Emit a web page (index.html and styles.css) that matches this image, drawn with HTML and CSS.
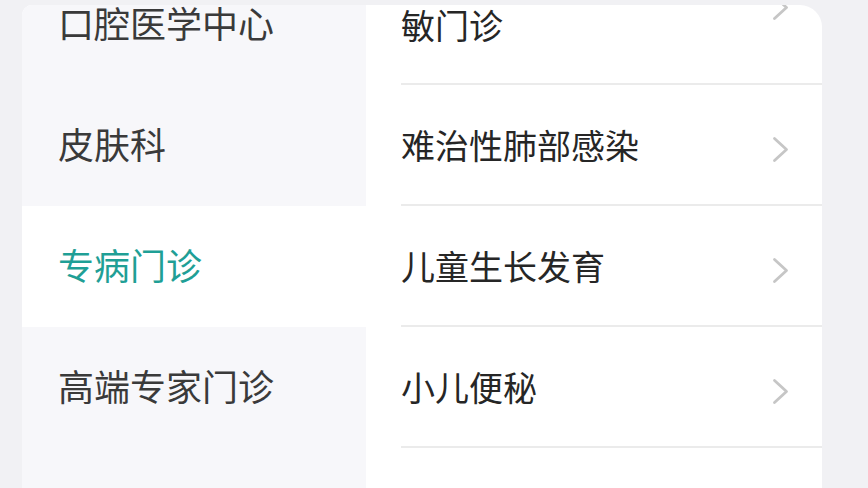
FILE: index.html
```html
<!DOCTYPE html>
<html lang="zh-CN">
<head>
<meta charset="utf-8">
<title>科室选择</title>
<link rel="stylesheet" href="styles.css">
</head>
<body>
<div class="page">
  <div class="card">
    <ul class="dept-list">
      <li class="dept">口腔医学中心</li>
      <li class="dept">皮肤科</li>
      <li class="dept active">专病门诊</li>
      <li class="dept">高端专家门诊</li>
      <li class="dept"></li>
    </ul>
    <ul class="clinic-list">
      <li class="clinic tall">
        <span class="clinic-name">敏门诊</span>
        <svg class="chev" viewBox="0 0 17 27" width="17" height="27"><polyline points="2.5,2.5 14.5,13.5 2.5,24.5"/></svg>
      </li>
      <li class="clinic">
        <span class="clinic-name">难治性肺部感染</span>
        <svg class="chev" viewBox="0 0 17 27" width="17" height="27"><polyline points="2.5,2.5 14.5,13.5 2.5,24.5"/></svg>
      </li>
      <li class="clinic">
        <span class="clinic-name">儿童生长发育</span>
        <svg class="chev" viewBox="0 0 17 27" width="17" height="27"><polyline points="2.5,2.5 14.5,13.5 2.5,24.5"/></svg>
      </li>
      <li class="clinic">
        <span class="clinic-name">小儿便秘</span>
        <svg class="chev" viewBox="0 0 17 27" width="17" height="27"><polyline points="2.5,2.5 14.5,13.5 2.5,24.5"/></svg>
      </li>
      <li class="clinic empty"></li>
    </ul>
  </div>
</div>
</body>
</html>
```

FILE: styles.css
```css
* {
  box-sizing: border-box;
}

html, body {
  margin: 0;
  padding: 0;
  height: 100%;
  overflow: hidden;
}

body {
  background: #f1f1f4;
  font-family: "Noto Sans CJK SC", "Noto Sans", sans-serif;
}

.page {
  padding: 5px 0 0 22px;
  height: 100%;
}

.card {
  width: 800px;
  height: 483px;
  background: #ffffff;
  border-radius: 10px 22px 0 0;
  overflow: hidden;
  display: grid;
  grid-template-columns: 344px 1fr;
}

ul {
  list-style: none;
  margin: 0;
  padding: 0;
}

.dept-list {
  background: #f7f7fa;
  margin-top: -41px;
}

.dept {
  height: 121px;
  display: flex;
  align-items: center;
  padding-left: 36px;
  padding-bottom: 6px;
  font-size: 36px;
  line-height: 42px;
  color: #3a3a3a;
}

.dept.active {
  background: #ffffff;
  color: #1f9f96;
}

.clinic-list {
  margin-top: -84px;
}

.clinic {
  margin-left: 35px;
  min-height: 121px;
  display: flex;
  align-items: center;
  justify-content: space-between;
  padding-right: 33px;
  border-bottom: 2px solid #ebebeb;
  font-size: 34px;
  line-height: 40px;
  color: #262626;
}

.clinic.tall {
  min-height: 164px;
}

.clinic.tall .clinic-name {
  padding-top: 46px;
}

.clinic.empty {
  border-bottom: none;
}

.chev {
  flex: none;
  display: block;
  margin-top: 10px;
}

.chev polyline {
  fill: none;
  stroke: #c6c6c6;
  stroke-width: 2.8;
  stroke-linecap: round;
  stroke-linejoin: round;
}
```
